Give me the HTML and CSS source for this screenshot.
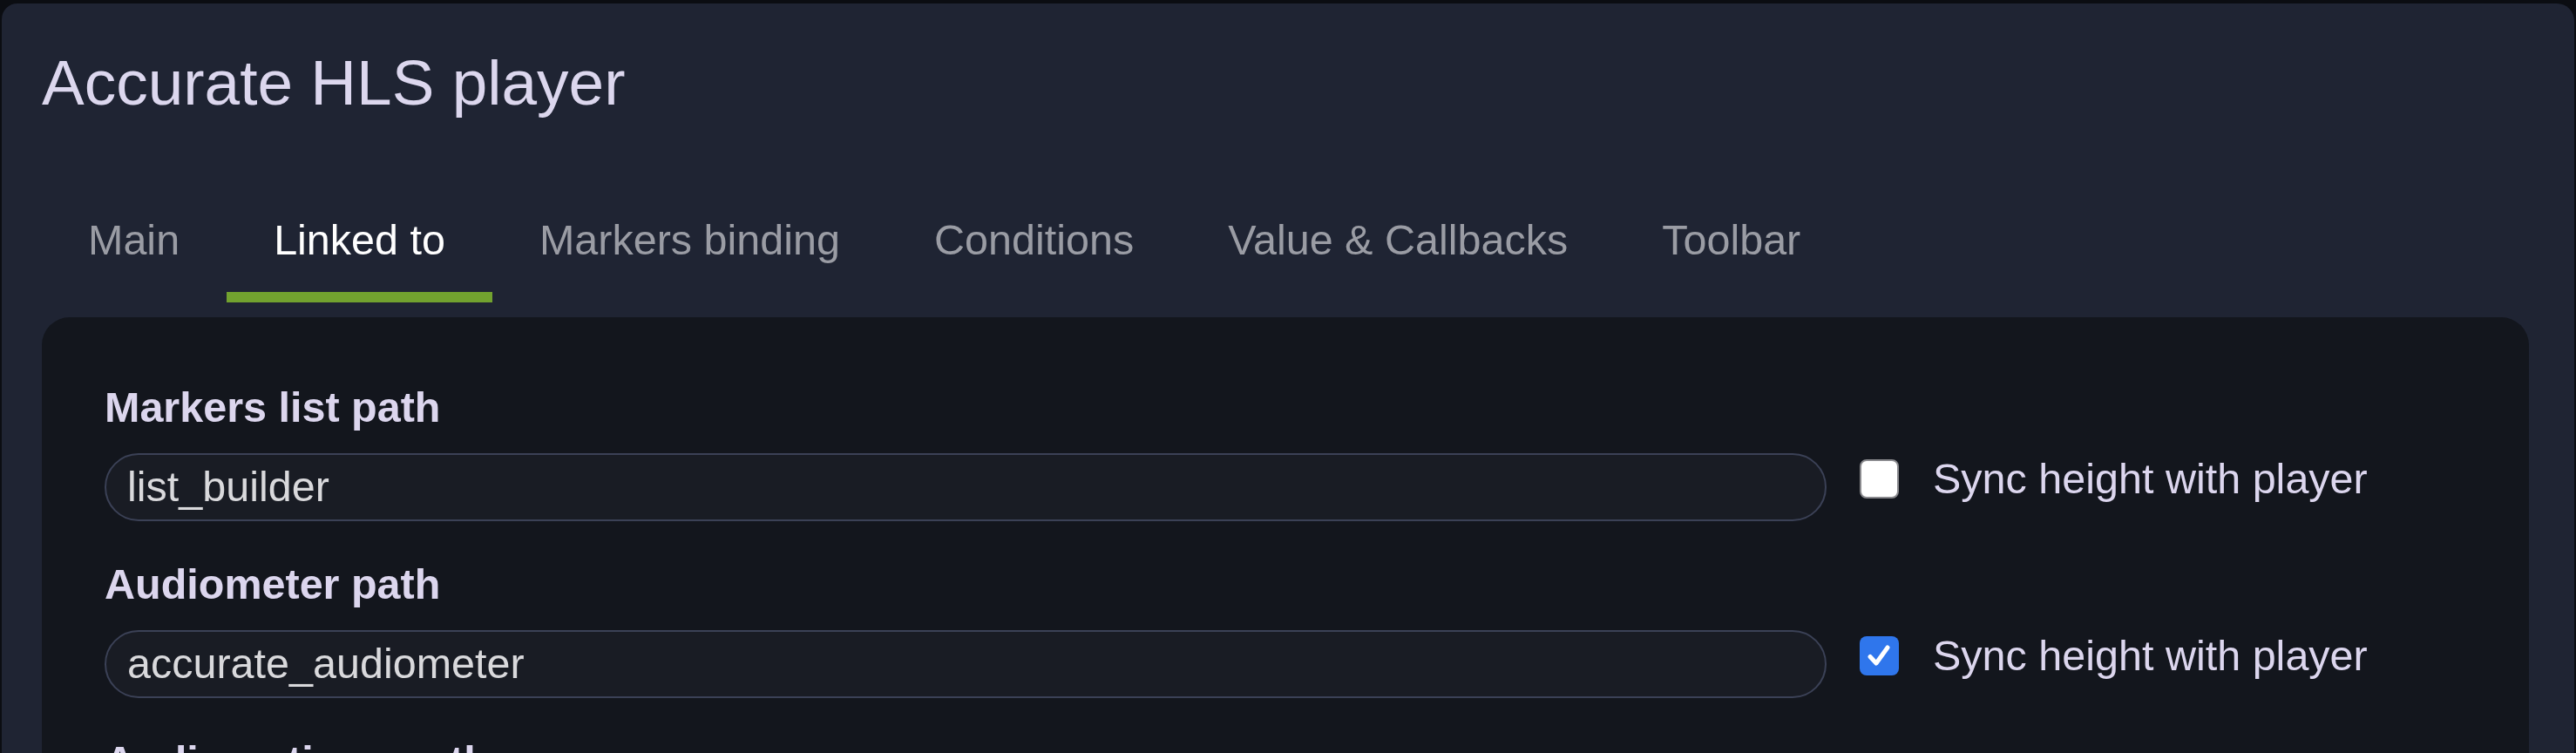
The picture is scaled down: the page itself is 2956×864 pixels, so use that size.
FILE: index.html
```html
<!DOCTYPE html>
<html lang="en">
<head>
<meta charset="utf-8">
<title>Accurate HLS player</title>
<link rel="stylesheet" href="styles.css">
</head>
<body>
<div class="backdrop">
  <span class="backdrop-mark">—</span>
  <span class="backdrop-text">Benchmark 2 &nbsp; 1</span>
</div>
<div class="window">
  <h1 class="title">Accurate HLS player</h1>
  <nav class="tabs">
    <div class="tab">Main</div>
    <div class="tab active">Linked to</div>
    <div class="tab">Markers binding</div>
    <div class="tab">Conditions</div>
    <div class="tab">Value &amp; Callbacks</div>
    <div class="tab">Toolbar</div>
  </nav>
  <section class="card">
    <div class="field">
      <div class="label">Markers list path</div>
      <div class="row">
        <div class="input">list_builder</div>
        <div class="check">
          <span class="box"></span>
          <span class="check-text">Sync height with player</span>
        </div>
      </div>
    </div>
    <div class="field">
      <div class="label">Audiometer path</div>
      <div class="row">
        <div class="input">accurate_audiometer</div>
        <div class="check">
          <span class="box checked"><svg viewBox="0 0 45 45" width="45" height="45"><path d="M12 23.5 L19 31 L32 13" fill="none" stroke="#ffffff" stroke-width="5" stroke-linecap="round" stroke-linejoin="round"/></svg></span>
          <span class="check-text">Sync height with player</span>
        </div>
      </div>
    </div>
    <div class="field">
      <div class="label">Audio options path</div>
      <div class="row">
        <div class="input"></div>
      </div>
    </div>
  </section>
</div>
</body>
</html>
```

FILE: styles.css
```css
html, body {
  margin: 0;
  padding: 0;
  background: #0b0d12;
  overflow: hidden;
  font-family: "Liberation Sans", Arial, Helvetica, sans-serif;
}

.backdrop {
  height: 4px;
  overflow: hidden;
  display: flex;
  gap: 110px;
  padding-left: 20px;
  color: #6f727b;
}

.backdrop-mark,
.backdrop-text {
  font-size: 48px;
  line-height: 40px;
  margin-top: -36px;
}

.window {
  width: 2952px;
  margin-left: 2px;
  box-sizing: border-box;
  background: #1f2433;
  border-radius: 18px 20px 0 0;
  padding: 48px 52px 0 46px;
  height: 900px;
}

.title {
  margin: 0;
  font-size: 73px;
  font-weight: 400;
  line-height: 85px;
  color: #dcd7ee;
}

.tabs {
  display: flex;
  margin-top: 78px;
  margin-left: -1px;
}

.tab {
  padding: 32px 54px;
  font-size: 48.5px;
  line-height: 56px;
  color: #9a9ca4;
  border-bottom: 12px solid transparent;
}

.tab.active {
  color: #ffffff;
  border-bottom-color: #72a22f;
}

.card {
  margin-top: 17px;
  background: #13161d;
  border-radius: 32px 32px 0 0;
  padding: 75px 72px 0;
  height: 600px;
}

.field {
  margin-bottom: 44px;
}

.label {
  font-size: 48.5px;
  font-weight: 700;
  line-height: 56px;
  color: #dcd6ee;
  margin-bottom: 25px;
}

.row {
  display: grid;
  grid-template-columns: 1fr 696px;
  column-gap: 38px;
  align-items: start;
}

.input {
  height: 78px;
  box-sizing: border-box;
  border: 2px solid #3b4156;
  border-radius: 39px;
  background: #191c24;
  padding: 0 24px 3px;
  display: flex;
  align-items: center;
  font-size: 48.5px;
  line-height: 56px;
  color: #d9d9dc;
}

.check {
  display: flex;
  align-items: center;
  gap: 39px;
  margin-top: 2px;
  height: 55px;
}

.box {
  width: 45px;
  height: 45px;
  box-sizing: border-box;
  border-radius: 8px;
  background: #ffffff;
  border: 2px solid #8a8a8e;
  flex: none;
}

.box.checked {
  background: #2f76ec;
  border: none;
}

.box svg {
  display: block;
}

.check-text {
  font-size: 48.5px;
  line-height: 55px;
  color: #dcd6ee;
}
```
